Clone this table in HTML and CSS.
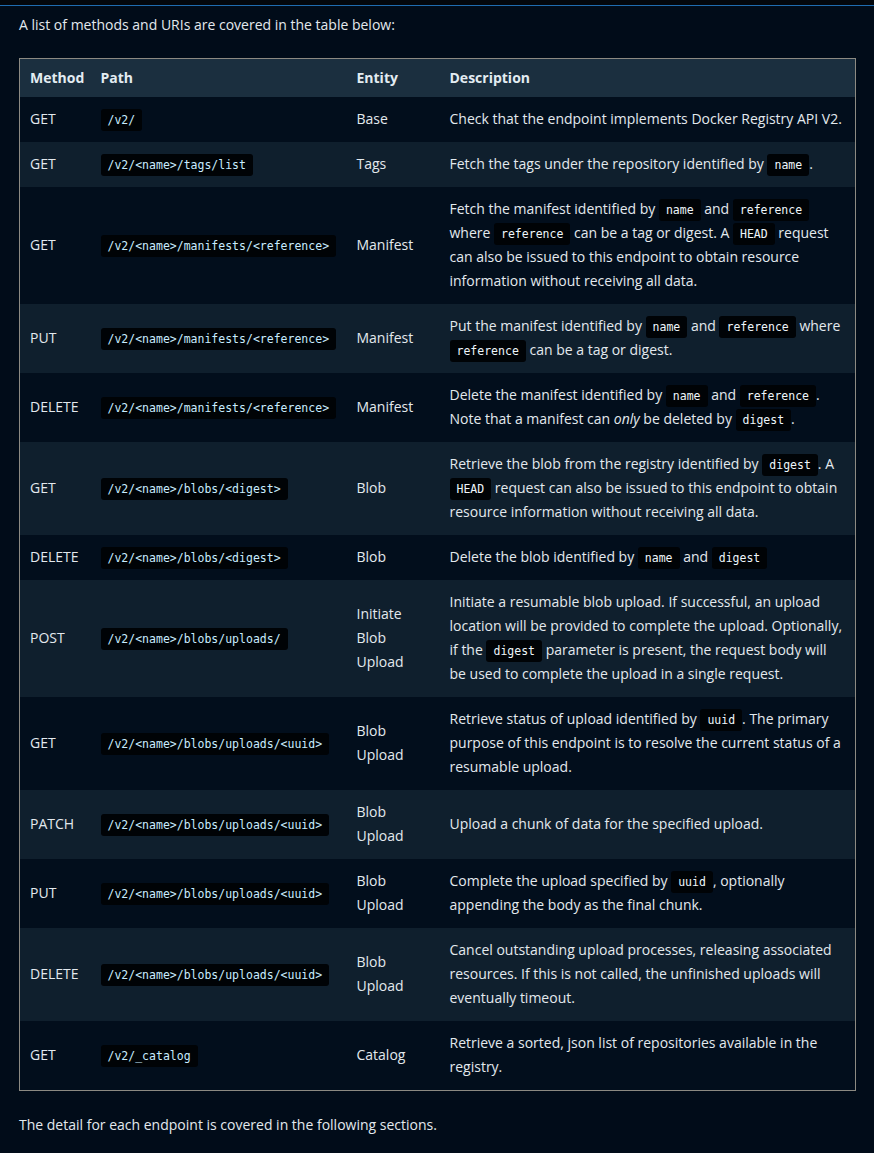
FILE: index.html
```html
<!DOCTYPE html>
<html lang="en">
<head>
<meta charset="utf-8">
<title>Docker Registry API</title>
<link rel="stylesheet" href="styles.css">
</head>
<body>
<div class="topbar"></div>
<main class="content">
  <p class="intro">A list of methods and URIs are covered in the table below:</p>
  <table class="api">
    <colgroup>
      <col class="c-method"><col class="c-path"><col class="c-entity"><col class="c-desc">
    </colgroup>
    <thead>
      <tr><th>Method</th><th>Path</th><th>Entity</th><th>Description</th></tr>
    </thead>
    <tbody>
      <tr><td>GET</td><td><code>/v2/</code></td><td>Base</td><td>Check that the endpoint implements Docker Registry API V2.</td></tr>
      <tr><td>GET</td><td><code>/v2/&lt;name&gt;/tags/list</code></td><td>Tags</td><td>Fetch the tags under the repository identified by <code>name</code>.</td></tr>
      <tr><td>GET</td><td><code>/v2/&lt;name&gt;/manifests/&lt;reference&gt;</code></td><td>Manifest</td><td>Fetch the manifest identified by <code>name</code> and <code>reference</code> where <code>reference</code> can be a tag or digest. A <code>HEAD</code> request can also be issued to this endpoint to obtain resource information without receiving all data.</td></tr>
      <tr><td>PUT</td><td><code>/v2/&lt;name&gt;/manifests/&lt;reference&gt;</code></td><td>Manifest</td><td>Put the manifest identified by <code>name</code> and <code>reference</code> where <code>reference</code> can be a tag or digest.</td></tr>
      <tr><td>DELETE</td><td><code>/v2/&lt;name&gt;/manifests/&lt;reference&gt;</code></td><td>Manifest</td><td>Delete the manifest identified by <code>name</code> and <code>reference</code>. Note that a manifest can <em>only</em> be deleted by <code>digest</code>.</td></tr>
      <tr><td>GET</td><td><code>/v2/&lt;name&gt;/blobs/&lt;digest&gt;</code></td><td>Blob</td><td>Retrieve the blob from the registry identified by <code>digest</code>. A <code>HEAD</code> request can also be issued to this endpoint to obtain resource information without receiving all data.</td></tr>
      <tr><td>DELETE</td><td><code>/v2/&lt;name&gt;/blobs/&lt;digest&gt;</code></td><td>Blob</td><td>Delete the blob identified by <code>name</code> and <code>digest</code></td></tr>
      <tr><td>POST</td><td><code>/v2/&lt;name&gt;/blobs/uploads/</code></td><td>Initiate Blob Upload</td><td>Initiate a resumable blob upload. If successful, an upload location will be provided to complete the upload. Optionally, if the <code>digest</code> parameter is present, the request body will be used to complete the upload in a single request.</td></tr>
      <tr><td>GET</td><td><code>/v2/&lt;name&gt;/blobs/uploads/&lt;uuid&gt;</code></td><td>Blob Upload</td><td>Retrieve status of upload identified by <code>uuid</code>. The primary purpose of this endpoint is to resolve the current status of a resumable upload.</td></tr>
      <tr><td>PATCH</td><td><code>/v2/&lt;name&gt;/blobs/uploads/&lt;uuid&gt;</code></td><td>Blob Upload</td><td>Upload a chunk of data for the specified upload.</td></tr>
      <tr><td>PUT</td><td><code>/v2/&lt;name&gt;/blobs/uploads/&lt;uuid&gt;</code></td><td>Blob Upload</td><td>Complete the upload specified by <code>uuid</code>, optionally appending the body as the final chunk.</td></tr>
      <tr><td>DELETE</td><td><code>/v2/&lt;name&gt;/blobs/uploads/&lt;uuid&gt;</code></td><td>Blob Upload</td><td>Cancel outstanding upload processes, releasing associated resources. If this is not called, the unfinished uploads will eventually timeout.</td></tr>
      <tr><td>GET</td><td><code>/v2/_catalog</code></td><td>Catalog</td><td>Retrieve a sorted, json list of repositories available in the registry.</td></tr>
    </tbody>
  </table>
  <p class="outro">The detail for each endpoint is covered in the following sections.</p>
</main>
</body>
</html>
```

FILE: styles.css
```css
html, body {
  margin: 0;
  padding: 0;
  background: #010c19;
}
body {
  font-family: "Open Sans", "Noto Sans", sans-serif;
  font-size: 14px;
  line-height: 24px;
  color: #e3e9ee;
  min-height: 1153px;
}
.topbar {
  height: 5px;
  background: #03070c;
  border-bottom: 1px solid #1f6cb0;
}
.content {
  padding: 7px 19px 20px;
}
.intro {
  margin: 0 0 21px;
}
.outro {
  margin: 22px 0 0;
}
.api {
  width: 837px;
  table-layout: fixed;
  border-collapse: collapse;
  border: 1px solid #8c8a82;
}
.c-method { width: 71px; }
.c-path { width: 256px; }
.c-entity { width: 93px; }
.c-desc { width: auto; }
.api th {
  background: #1b2f3f;
  font-weight: 700;
  text-align: left;
  padding: 7px 10px;
  color: #e3ecf2;
}
.api td {
  padding: 10px 10px 11px;
  vertical-align: middle;
}
.api tbody tr:nth-child(odd) { background: #020e1c; }
.api tbody tr:nth-child(even) { background: #0f1f2d; }
code {
  font-family: "DejaVu Sans Mono", "Liberation Mono", monospace;
  font-size: 11.5px;
  line-height: 1;
  background: #000306;
  color: #eef6fb;
  padding: 4px 7px;
  border-radius: 3px;
}
td:nth-child(2) code {
  color: #c9ecff;
}
em { font-style: italic; }
```
